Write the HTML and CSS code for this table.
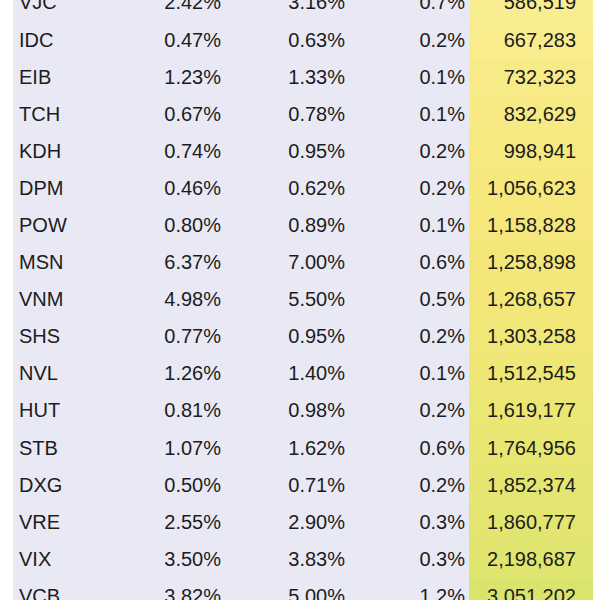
FILE: index.html
```html
<!DOCTYPE html>
<html>
<head>
<meta charset="utf-8">
<link rel="stylesheet" href="styles.css">
</head>
<body>
<div class="sheet">
  <div class="row"><span class="name">VJC</span><span class="num">2.42%</span><span class="num">3.16%</span><span class="num">0.7%</span><span class="vol" style="background:#f8ed91">586,519</span></div>
  <div class="row"><span class="name">IDC</span><span class="num">0.47%</span><span class="num">0.63%</span><span class="num">0.2%</span><span class="vol" style="background:#f8ec8c">667,283</span></div>
  <div class="row"><span class="name">EIB</span><span class="num">1.23%</span><span class="num">1.33%</span><span class="num">0.1%</span><span class="vol" style="background:#f7eb88">732,323</span></div>
  <div class="row"><span class="name">TCH</span><span class="num">0.67%</span><span class="num">0.78%</span><span class="num">0.1%</span><span class="vol" style="background:#f7ea84">832,629</span></div>
  <div class="row"><span class="name">KDH</span><span class="num">0.74%</span><span class="num">0.95%</span><span class="num">0.2%</span><span class="vol" style="background:#f6e980">998,941</span></div>
  <div class="row"><span class="name">DPM</span><span class="num">0.46%</span><span class="num">0.62%</span><span class="num">0.2%</span><span class="vol" style="background:#f6e87d">1,056,623</span></div>
  <div class="row"><span class="name">POW</span><span class="num">0.80%</span><span class="num">0.89%</span><span class="num">0.1%</span><span class="vol" style="background:#f5e77b">1,158,828</span></div>
  <div class="row"><span class="name">MSN</span><span class="num">6.37%</span><span class="num">7.00%</span><span class="num">0.6%</span><span class="vol" style="background:#f4e77a">1,258,898</span></div>
  <div class="row"><span class="name">VNM</span><span class="num">4.98%</span><span class="num">5.50%</span><span class="num">0.5%</span><span class="vol" style="background:#f3e779">1,268,657</span></div>
  <div class="row"><span class="name">SHS</span><span class="num">0.77%</span><span class="num">0.95%</span><span class="num">0.2%</span><span class="vol" style="background:#f1e778">1,303,258</span></div>
  <div class="row"><span class="name">NVL</span><span class="num">1.26%</span><span class="num">1.40%</span><span class="num">0.1%</span><span class="vol" style="background:#eee776">1,512,545</span></div>
  <div class="row"><span class="name">HUT</span><span class="num">0.81%</span><span class="num">0.98%</span><span class="num">0.2%</span><span class="vol" style="background:#ebe775">1,619,177</span></div>
  <div class="row"><span class="name">STB</span><span class="num">1.07%</span><span class="num">1.62%</span><span class="num">0.6%</span><span class="vol" style="background:#e8e673">1,764,956</span></div>
  <div class="row"><span class="name">DXG</span><span class="num">0.50%</span><span class="num">0.71%</span><span class="num">0.2%</span><span class="vol" style="background:#e5e671">1,852,374</span></div>
  <div class="row"><span class="name">VRE</span><span class="num">2.55%</span><span class="num">2.90%</span><span class="num">0.3%</span><span class="vol" style="background:#e2e570">1,860,777</span></div>
  <div class="row"><span class="name">VIX</span><span class="num">3.50%</span><span class="num">3.83%</span><span class="num">0.3%</span><span class="vol" style="background:#dfe56e">2,198,687</span></div>
  <div class="row"><span class="name">VCB</span><span class="num">3.82%</span><span class="num">5.00%</span><span class="num">1.2%</span><span class="vol" style="background:#dae46c">3,051,202</span></div>
</div>
</body>
</html>
```

FILE: styles.css
```css
html, body {
  margin: 0;
  padding: 0;
  background: #ffffff;
  overflow: hidden;
}

.sheet {
  margin: -15.6px 0 0 13px;
  width: 580px;
  background: #e9e9f5;
  font-family: "Liberation Sans", Arial, sans-serif;
  font-size: 20px;
  color: #1c1c1c;
}

.row {
  display: grid;
  grid-template-columns: 112px 100px 124px 120px 124px;
  height: 37.1px;
  line-height: 37.1px;
  white-space: nowrap;
}

.name {
  padding-left: 6px;
}

.num {
  text-align: right;
  padding-right: 4px;
}

.vol {
  text-align: right;
  padding-right: 17px;
  background: #f5e77b;
}
```
